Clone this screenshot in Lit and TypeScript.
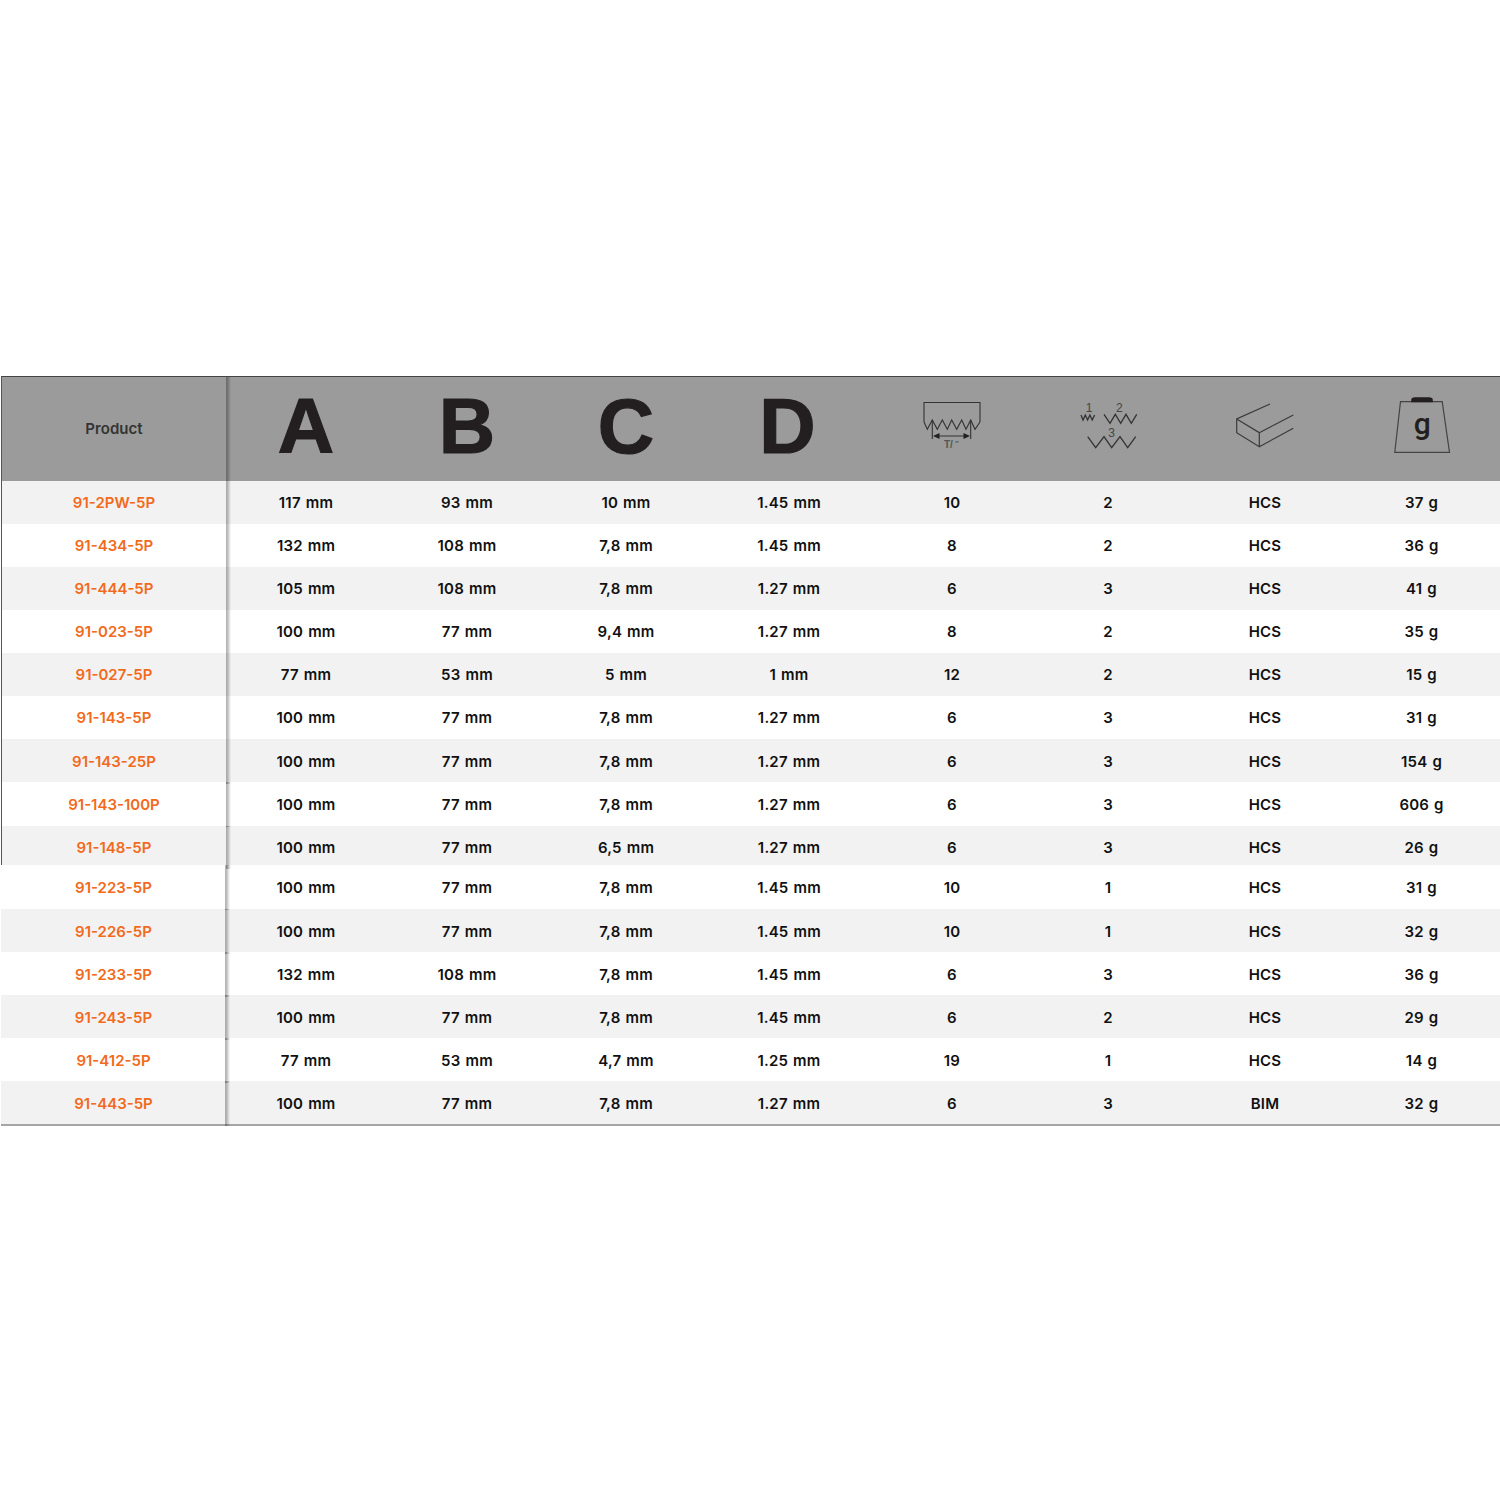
import { LitElement, html, css, svg } from "lit";
import { customElement } from "lit/decorators.js";

type Row = string[];
const first: Row[] = [
  ["91-2PW-5P","117 mm","93 mm","10 mm","1.45 mm","10","2","HCS","37 g"],
  ["91-434-5P","132 mm","108 mm","7,8 mm","1.45 mm","8","2","HCS","36 g"],
  ["91-444-5P","105 mm","108 mm","7,8 mm","1.27 mm","6","3","HCS","41 g"],
  ["91-023-5P","100 mm","77 mm","9,4 mm","1.27 mm","8","2","HCS","35 g"],
  ["91-027-5P","77 mm","53 mm","5 mm","1 mm","12","2","HCS","15 g"],
  ["91-143-5P","100 mm","77 mm","7,8 mm","1.27 mm","6","3","HCS","31 g"],
  ["91-143-25P","100 mm","77 mm","7,8 mm","1.27 mm","6","3","HCS","154 g"],
  ["91-143-100P","100 mm","77 mm","7,8 mm","1.27 mm","6","3","HCS","606 g"],
  ["91-148-5P","100 mm","77 mm","6,5 mm","1.27 mm","6","3","HCS","26 g"],
];
const second: Row[] = [
  ["91-223-5P","100 mm","77 mm","7,8 mm","1.45 mm","10","1","HCS","31 g"],
  ["91-226-5P","100 mm","77 mm","7,8 mm","1.45 mm","10","1","HCS","32 g"],
  ["91-233-5P","132 mm","108 mm","7,8 mm","1.45 mm","6","3","HCS","36 g"],
  ["91-243-5P","100 mm","77 mm","7,8 mm","1.45 mm","6","2","HCS","29 g"],
  ["91-412-5P","77 mm","53 mm","4,7 mm","1.25 mm","19","1","HCS","14 g"],
  ["91-443-5P","100 mm","77 mm","7,8 mm","1.27 mm","6","3","BIM","32 g"],
];

const teeth = svg`<svg width="60" height="50" viewBox="0 0 60 50" fill="none" stroke="#333" stroke-width="1.1">
  <path d="M2 21V1.500H58V21"/>
  <path d="M2 21L5.300 28.300L10.300 19L15.300 28.300L20.300 19L25.300 28.300L29.700 19L34.700 28.300L39.700 19L44 28.300L48.700 19L53 28.300L58 21"/>
  <path d="M10.300 19V38M48.700 19V38M14 35H45"/>
  <path d="M11 35l6.500-3v6zM48 35l-6.500-3v6z" fill="#222" stroke="none"/>
  <text x="22" y="47" font-family="Liberation Sans" font-weight="700" font-size="10" fill="#555" stroke="none">T/</text>
  <text x="33" y="45" font-family="Liberation Sans" font-weight="700" font-size="8" fill="#555" stroke="none">"</text>
</svg>`;

const waves = svg`<svg width="60" height="50" viewBox="0 0 60 50" fill="none" stroke="#333" stroke-width="1.3">
  <path d="M3 14l2 5 2.300-5 2.300 5 2.300-5 2.300 5 2.400-5"/>
  <path d="M26 13.300L32 22.300L37.300 13.300L42.700 22.300L48 13.300L53.300 22.300L58.700 13.300"/>
  <path d="M9.700 35.700L17.700 46.700L26 35.700L33.700 46.700L42 35.700L49.700 46.700L57.700 35.700"/>
  <text x="11" y="10.700" text-anchor="middle" font-family="Liberation Sans" font-size="12" fill="#444" stroke="none">1</text>
  <text x="41.300" y="10.700" text-anchor="middle" font-family="Liberation Sans" font-size="12" fill="#444" stroke="none">2</text>
  <text x="33.700" y="36.300" text-anchor="middle" font-family="Liberation Sans" font-size="12" fill="#444" stroke="none">3</text>
</svg>`;

const bar = svg`<svg width="60" height="50" viewBox="0 0 60 50" fill="none" stroke="#3a3a3a" stroke-width="1.2">
  <path d="M35 3L1.700 18V31.700L24.300 45.700V31.700L1.700 18M24.300 31.700L58.300 14M24.300 45.700L58.300 27.300"/>
</svg>`;

const weight = svg`<svg width="60" height="60" viewBox="0 0 60 60" fill="none" stroke="#444" stroke-width="1.2">
  <path d="M8.500 5.700H50.200L57.500 56.300H2.800Z"/>
  <path d="M19.200 6.300V4Q19.200 1.300 23 1.300H37Q40.800 1.300 40.800 4V6.300Z" fill="#231f20" stroke="none"/>
  <text x="30.200" y="37.700" text-anchor="middle" font-family="Roboto" font-weight="500" font-size="30" fill="#231f20" stroke="none">g</text>
</svg>`;

@customElement("app-root")
export class AppRoot extends LitElement {
  static styles = css`
    :host { display: block; width: 1500px; height: 1500px; background: #fff; font-family: Inter, "Open Sans", sans-serif; overflow: hidden; }
    .page { padding-top: 376px; }
    .grid { display: grid; }
    .tbl1 { border-top: 1px solid #444; margin-left: 1px; border-left: 1px solid #555; }
    .tbl1 .grid { grid-template-columns: 225px 158px 164px 154px 172px 154px 158px 156px 157px; }
    .tbl2 { margin-left: 1px; border-bottom: 2px solid #a5a5a5; }
    .tbl2 .grid { grid-template-columns: 226px 158px 164px 154px 172px 154px 158px 156px 157px; }
    .head { background: #9b9b9b; height: 104px; }
    .head > div { display: flex; align-items: center; justify-content: center; }
    .head .p { font-size: 15px; font-weight: 600; color: #333; letter-spacing: 0.05px; padding-right: 1px; padding-bottom: 2px; }
    .letter { font-family: "Liberation Sans", sans-serif; font-weight: 700; font-size: 78px; line-height: 1; color: #231f20; -webkit-text-stroke: 1.2px #231f20; padding-bottom: 7px; }
    .head > .shift { padding-right: 3px; }
    .row { height: 43px; }
    .row > div { text-align: center; font-size: 15px; font-weight: 600; color: #111; letter-spacing: 0.2px; word-spacing: 1px; height: 100%; line-height: 43px; }
    .row.odd { background: #f2f2f2; }
    .row.low > div { line-height: 45px; }
    .row.h44 { height: 44px; }
    .row.h39 { height: 39px; }
    .row.h39 > div { line-height: 43px; }
    .row > .code { color: #f26a1b; letter-spacing: 0; padding-right: 1px; }
    .col1 { position: relative; }
    .col1::after { content: ""; position: absolute; top: 0; bottom: 0; left: 100%; width: 5px; margin-left: -1px; background: linear-gradient(to right, rgba(0,0,0,.3), rgba(0,0,0,.26) 30%, rgba(0,0,0,0)); }
    .tbl2 .col1::after { margin-left: -2px; }
    .ic { padding-bottom: 6px; }
  `;

  private row(r: Row, odd: boolean, cls = "") {
    return html`<div class="grid row ${odd ? "odd" : ""} ${cls}">
      ${r.map((c, j) => html`<div class="${j === 0 ? "code col1" : ""}">${c}</div>`)}
    </div>`;
  }

  render() {
    const cls = (i: number) =>
      i === 8 ? "h39" : i === 7 ? "h44 low" : i === 6 ? "low" : "";
    return html`<div class="page">
      <section class="tbl1">
        <div class="grid head">
          <div class="p col1">Product</div>
          <div class="letter">A</div><div class="letter">B</div><div class="letter">C</div><div class="letter shift">D</div>
          <div class="ic">${teeth}</div><div class="ic">${waves}</div><div class="ic">${bar}</div><div class="ic">${weight}</div>
        </div>
        ${first.map((r, i) => this.row(r, i % 2 === 0, cls(i)))}
      </section>
      <section class="tbl2">
        ${second.map((r, i) => this.row(r, i % 2 === 1, `low ${i === 0 ? "h44" : ""}`))}
      </section>
    </div>`;
  }
}
